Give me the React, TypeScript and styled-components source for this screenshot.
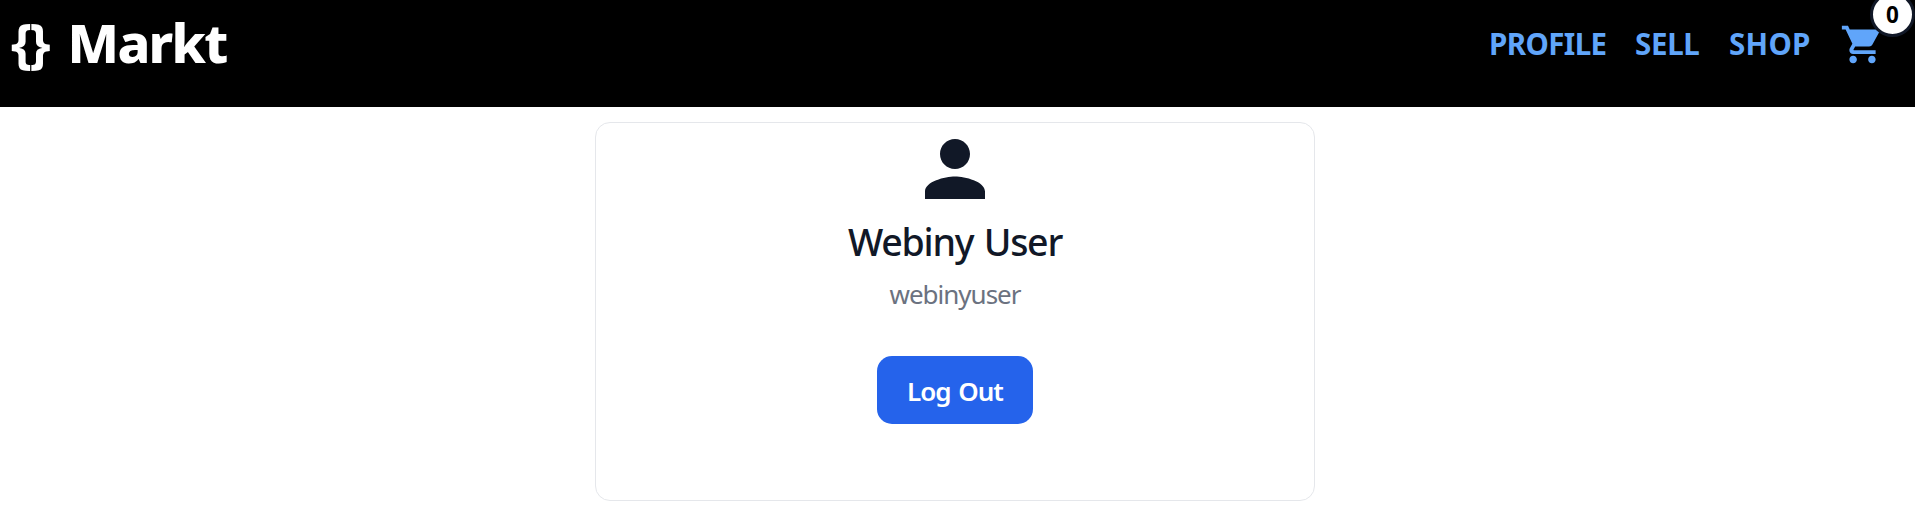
import React from "react";
import styled, { createGlobalStyle } from "styled-components";
import { MdPerson, MdShoppingCart } from "react-icons/md";

const GlobalStyle = createGlobalStyle`
  *, *::before, *::after { box-sizing: border-box; }
  body {
    margin: 0;
    background: #fff;
    overflow: hidden;
    font-family: "Segoe UI", "Noto Sans", "Open Sans", sans-serif;
  }
`;

const Header = styled.header`
  display: flex;
  justify-content: space-between;
  align-items: flex-start;
  height: 107px;
  padding: 5px 30px 0 11px;
  background: #000;
`;

const Brand = styled.a`
  display: flex;
  gap: 20px;
  color: #fff;
  font-size: 54px;
  line-height: 74px;
`;

const BrandPart = styled.span<{ $tracking: number; $weight: number }>`
  font-weight: ${(p) => p.$weight};
  letter-spacing: ${(p) => p.$tracking}px;
`;

const Nav = styled.nav`
  display: flex;
  align-items: center;
  height: 78px;
`;

const NavLink = styled.a<{ $width: number; $tracking?: number }>`
  width: ${(p) => p.$width}px;
  color: #60a5fa;
  font-size: 29.5px;
  line-height: 40px;
  font-weight: 700;
  white-space: nowrap;
  letter-spacing: ${(p) => p.$tracking ?? 0}px;
`;

const Cart = styled.a`
  position: relative;
  display: block;
  width: 45px;
  height: 45px;
  color: #60a5fa;
`;

const Badge = styled.span`
  position: absolute;
  top: -30px;
  right: -30px;
  display: flex;
  align-items: center;
  justify-content: center;
  width: 45px;
  height: 45px;
  border: 3px solid #111827;
  border-radius: 50%;
  background: #fff;
  color: #000;
  font-size: 22.5px;
  font-weight: 700;
  line-height: 1;
  padding-top: 2px;
`;

const Card = styled.main`
  display: flex;
  flex-direction: column;
  align-items: center;
  width: 720px;
  height: 379px;
  margin: 15px 0 0 595px;
  padding-top: 1px;
  border: 1px solid #e5e7eb;
  border-radius: 15px;
`;

const Avatar = styled(MdPerson)`
  flex: none;
  color: #111827;
`;

const Name = styled.h1`
  margin: 2px 0 0;
  color: #111827;
  font-size: 37.5px;
  line-height: 52px;
  font-weight: 500;
  letter-spacing: -1.25px;
  word-spacing: 2px;
`;

const Username = styled.p`
  margin: 0;
  color: #6b7280;
  font-size: 26px;
  line-height: 52px;
  letter-spacing: -1px;
`;

const LogOut = styled.button`
  width: 156px;
  height: 68px;
  margin-top: 36px;
  padding: 1px 0 0;
  border: 0;
  border-radius: 15px;
  background: #2563eb;
  color: #fff;
  font-family: inherit;
  font-size: 26px;
  font-weight: 600;
  letter-spacing: -1px;
  word-spacing: 2px;
`;

export default function App() {
  return (
    <>
      <GlobalStyle />
      <Header>
        <Brand>
          <BrandPart $tracking={-3} $weight={700}>{"{}"}</BrandPart>
          <BrandPart $tracking={-1.7} $weight={800}>Markt</BrandPart>
        </Brand>
        <Nav>
          <NavLink $width={146} $tracking={-0.6}>PROFILE</NavLink>
          <NavLink $width={94} $tracking={-0.3}>SELL</NavLink>
          <NavLink $width={111} $tracking={0.3}>SHOP</NavLink>
          <Cart>
            <MdShoppingCart size={45} />
            <Badge>0</Badge>
          </Cart>
        </Nav>
      </Header>
      <Card>
        <Avatar size={90} />
        <Name>Webiny User</Name>
        <Username>webinyuser</Username>
        <LogOut>Log Out</LogOut>
      </Card>
    </>
  );
}
